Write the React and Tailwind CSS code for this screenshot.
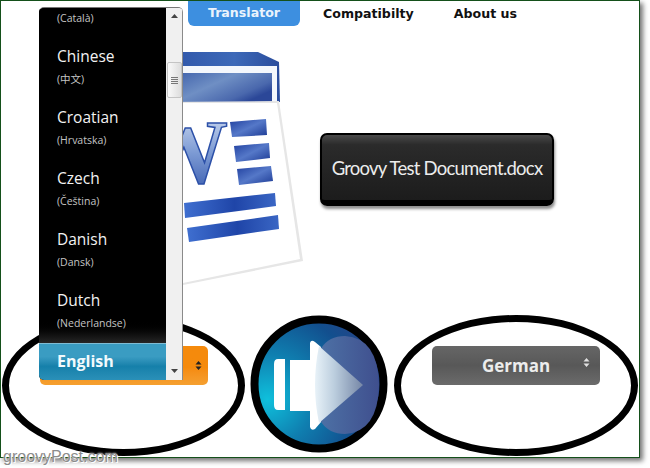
import React from "react";

const languages = [
  ["Catalan", "(Català)"],
  ["Chinese", "(中文)"],
  ["Croatian", "(Hrvatska)"],
  ["Czech", "(Čeština)"],
  ["Danish", "(Dansk)"],
  ["Dutch", "(Nederlandse)"],
];

function Updown({ color }) {
  return (
    <svg width="7" height="9" viewBox="0 0 7 9" className="block">
      <path d="M3.5 0 L6.5 3.4 H0.5 Z M3.5 9 L0.5 5.6 H6.5 Z" fill={color} />
    </svg>
  );
}

function WordIcon() {
  return (
    <svg width="140" height="236" viewBox="166 52 140 236" className="block shrink-0">
      <defs>
        <linearGradient id="lid" x1="0" y1="0" x2="1" y2="0">
          <stop offset="0" stopColor="#2f55a8" />
          <stop offset="0.6" stopColor="#3d69b8" />
          <stop offset="1" stopColor="#2a4c9c" />
        </linearGradient>
        <linearGradient id="inner" x1="0" y1="0" x2="1" y2="0.6">
          <stop offset="0" stopColor="#3a5ca8" />
          <stop offset="0.5" stopColor="#6f8fc4" />
          <stop offset="0.85" stopColor="#4a68ad" />
          <stop offset="1" stopColor="#2b4798" />
        </linearGradient>
        <linearGradient id="block" x1="0" y1="0" x2="1" y2="1">
          <stop offset="0" stopColor="#1f3f9f" />
          <stop offset="0.5" stopColor="#5578c8" />
          <stop offset="1" stopColor="#1c3a94" />
        </linearGradient>
        <linearGradient id="bar" x1="0" y1="0" x2="1" y2="0">
          <stop offset="0" stopColor="#3f6fd0" />
          <stop offset="0.55" stopColor="#1f45a8" />
          <stop offset="1" stopColor="#3a66c4" />
        </linearGradient>
        <linearGradient id="wfill" x1="0" y1="0" x2="0" y2="1">
          <stop offset="0" stopColor="#dfe8f6" />
          <stop offset="0.5" stopColor="#7d9bd4" />
          <stop offset="1" stopColor="#2c50a8" />
        </linearGradient>
      </defs>
      <path d="M166 52 H258 L279 62 L280 102 H166 Z" fill="url(#lid)" />
      <path d="M166 66 H277 V102 H166 Z" fill="#f4f7fc" />
      <path d="M166 73 H272 V102 H166 Z" fill="url(#inner)" />
      <path d="M166 102 L279 101 L303 261 L183 285 L166 285 Z" fill="#e6e6e6" />
      <path d="M166 103 L277 103 L300 259 L183 283 L166 283 Z" fill="#ffffff" />
      <text x="138" y="183" fontFamily="'Liberation Serif', serif" fontWeight="700" fontSize="90" fill="url(#wfill)" stroke="#2c50a8" strokeWidth="1.5">W</text>
      <path d="M230 122 L266 119 L267 135 L232 137 Z" fill="url(#block)" />
      <path d="M234 146 L269 143 L270 158 L236 162 Z" fill="url(#block)" />
      <path d="M237 169 L271 166 L273 181 L239 185 Z" fill="url(#block)" />
      <path d="M184 203 L275 193 L276 206 L185 218 Z" fill="url(#bar)" />
      <path d="M187 228 L278 215 L279 229 L189 242 Z" fill="url(#bar)" />
    </svg>
  );
}

function Speaker() {
  return (
    <svg width="150" height="150" viewBox="0 0 150 150" className="block shrink-0 -ml-[6px] -mr-[7px] -mt-[5px]">
      <defs>
        <radialGradient id="disc" cx="0.1" cy="0.62" r="1">
          <stop offset="0" stopColor="#0fc0dc" />
          <stop offset="0.35" stopColor="#0f7fb0" />
          <stop offset="0.7" stopColor="#124f8e" />
          <stop offset="1" stopColor="#2e3f85" />
        </radialGradient>
        <linearGradient id="round" x1="0" y1="0" x2="1" y2="0">
          <stop offset="0" stopColor="#4f75a8" />
          <stop offset="1" stopColor="#3f4f8e" />
        </linearGradient>
        <linearGradient id="cone" x1="0" y1="0" x2="1" y2="0">
          <stop offset="0" stopColor="#e8f2f8" />
          <stop offset="0.4" stopColor="#bccede" />
          <stop offset="1" stopColor="#7586a6" />
        </linearGradient>
      </defs>
      <circle cx="74" cy="74" r="64.5" fill="url(#disc)" stroke="#000000" strokeWidth="8" />
      <path d="M68 75 Q68 26 100 26 Q133 28 134 75 Q133 122 100 124 Q68 124 68 75 Z" fill="url(#round)" />
      <path d="M40 49 H33 Q29 49 29 54 V95 Q29 100 33 100 H40 Z" fill="#ffffff" />
      <path d="M45 50 H65 V33 Q66 29 70 32 L76 37 Q68 75 76 112 L70 119 Q66 121 65 117 V101 H45 Z" fill="#ffffff" />
      <path d="M74 36 L118 75 L74 113 Q66 75 74 36 Z" fill="url(#cone)" />
    </svg>
  );
}

export default function App() {
  return (
    <div className="relative w-[650px] h-[468px] bg-white overflow-hidden font-['Liberation_Sans',sans-serif]">
      <div className="relative w-[640px] h-[458px] border border-[#14501a] bg-white shadow-[3px_3px_5px_rgba(0,0,0,0.55)] flex flex-col">
        <nav className="flex items-start shrink-0 h-[25px] pl-[187px] font-['DejaVu_Sans',sans-serif] font-bold text-[12.6px]">
          <a className="flex items-center justify-center w-[112px] h-[25px] rounded-b-[6px] bg-[#3d8fe0] text-[#eaf3fc]">Translator</a>
          <a className="ml-[23px] h-[25px] leading-[25px] text-[#111111]">Compatibilty</a>
          <a className="ml-[40px] h-[25px] leading-[25px] text-[#111111]">About us</a>
        </nav>

        <main className="flex items-start shrink-0 h-[289px] pt-[26px] pl-[165px]">
          <WordIcon />
          <button className="ml-[14px] mt-[81px] flex items-center justify-center whitespace-nowrap w-[234px] h-[73px] pt-[2px] rounded-[7px] border-2 border-black border-b-[6px] bg-gradient-to-b from-[#4a4a4a] via-[#2b2b2b] via-[15%] to-[#1c1c1c] shadow-[1px_3px_3px_rgba(0,0,0,0.45)] text-[#ececec] text-[18.5px] tracking-[-0.76px] font-['Lato',sans-serif]">
            Groovy Test Document.docx
          </button>
        </main>

        <section className="flex items-start shrink-0 h-[141px] pl-[1px] gap-[6px]">
          <div className="flex justify-center items-start w-[243px] h-[141px] pt-[24px] rounded-[50%] border-[7px] border-black shrink-0">
            <div className="flex items-center justify-end shrink-0 w-[168px] h-[39px] pr-[6px] rounded-[5px] bg-gradient-to-b from-[#f58a0c] from-[55%] to-[#f5a030]">
              <Updown color="#222222" />
            </div>
          </div>
          <Speaker />
          <div className="flex justify-center items-start w-[244px] h-[141px] pt-[24px] rounded-[50%] border-[7px] border-black shrink-0">
            <div className="relative flex items-center justify-center shrink-0 w-[168px] h-[39px] rounded-[5px] bg-gradient-to-b from-[#666666] via-[#585858] via-[50%] to-[#6b6b6b] text-[#ececec] font-['Open_Sans',sans-serif] font-bold text-[17px]">
              German
              <span className="absolute right-[10px] top-[12px]"><Updown color="#e0e0e0" /></span>
            </div>
          </div>
        </section>

        <div className="absolute left-[38px] top-[6px] w-[144px] h-[373px] flex rounded-t-[5px] rounded-bl-[5px] overflow-hidden border-t border-[#777777] font-['Open_Sans',sans-serif]">
          <div className="w-[127px] h-full flex flex-col bg-black">
            <div className="flex-1 overflow-hidden bg-gradient-to-b from-black from-[93%] to-[#262626]">
              <ul className="-mt-[26px] pl-[18px]">
                {languages.map(([name, native]) => (
                  <li key={name} className="h-[61px] pt-[1px]">
                    <div className="text-[15.5px] leading-[24px] text-[#f2f2f2]">{name}</div>
                    <div className="text-[10.5px] leading-[22px] text-[#c4c4c4] font-['Open_Sans','Noto_Sans_CJK_SC',sans-serif]">{native}</div>
                  </li>
                ))}
              </ul>
            </div>
            <div className="h-[37px] pl-[18px] shrink-0 border-t border-[#7fbcd4] bg-gradient-to-b from-[#3a9cc2] from-[35%] via-[#1580aa] via-[62%] to-[#2a90b8] text-[16px] leading-[34px] font-bold text-[#f2fafd]">
              English
            </div>
          </div>
          <div className="w-[17px] h-full relative flex flex-col items-center bg-[#f0f0f0] border-r border-[#8a8a8a]">
            <svg width="7" height="4" viewBox="0 0 7 4" className="mt-[6px]"><path d="M3.5 0 L7 4 H0 Z" fill="#444444" /></svg>
            <div className="mt-[44px] w-[15px] h-[36px] rounded-[2px] border border-[#c4c4c4] bg-gradient-to-r from-[#fafafa] to-[#dddddd] flex flex-col items-center justify-center gap-[1px]">
              <span className="w-[7px] h-[1px] bg-[#777777]" />
              <span className="w-[7px] h-[1px] bg-[#777777]" />
              <span className="w-[7px] h-[1px] bg-[#777777]" />
              <span className="w-[7px] h-[1px] bg-[#777777]" />
            </div>
            <svg width="7" height="4" viewBox="0 0 7 4" className="mt-auto mb-[7px]"><path d="M3.5 4 L7 0 H0 Z" fill="#444444" /></svg>
          </div>
        </div>
      </div>

      <span className="absolute left-[3px] top-[448px] text-[16px] leading-[18px] text-[#8c8c8c] [text-shadow:0_0_2px_#ffffff,1px_1px_0_#ffffff] font-['Liberation_Sans',sans-serif]">groovyPost.com</span>
    </div>
  );
}
